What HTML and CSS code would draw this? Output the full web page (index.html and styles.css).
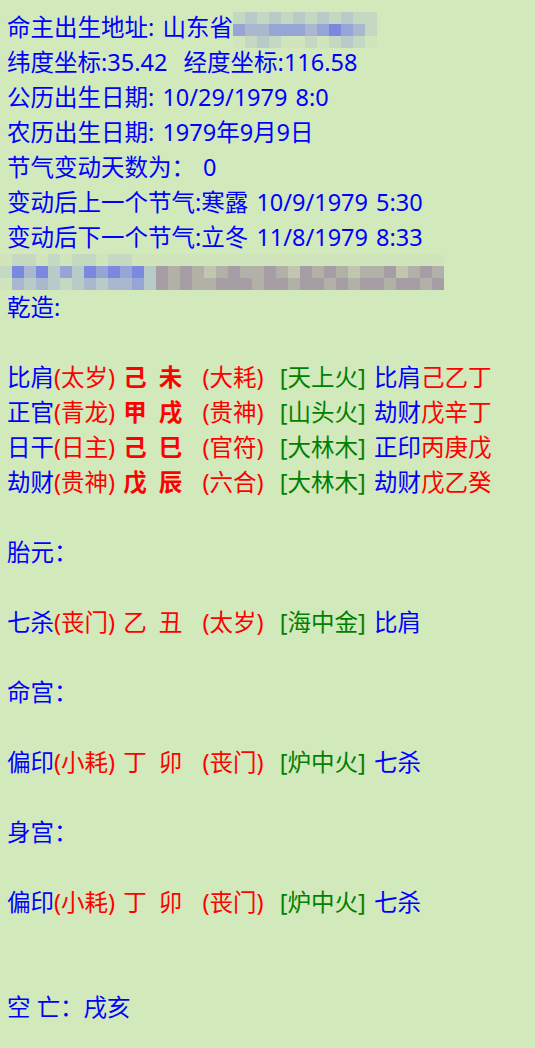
FILE: index.html
```html
<!DOCTYPE html>
<html>
<head>
<meta charset="utf-8">
<link rel="stylesheet" href="styles.css">
</head>
<body>
<div class="page">
  <div class="line">命主出生地址: 山东省<span class="mosaic m1"><span class="mrow"><i class="f1"></i><i class="f2"></i><i class="f1"></i><i class="f2"></i><i class="f1"></i><i class="f2"></i><i class="f1"></i><i class="f2"></i><i class="f1"></i><i class="f2"></i><i class="f1"></i><i class="f1"></i></span><span class="mrow"><i class="b2"></i><i class="b3"></i><i class="b3"></i><i class="b2"></i><i class="b2"></i><i class="b2"></i><i class="b3"></i><i class="b2"></i><i class="b1"></i><i class="b2"></i><i class="b3"></i><i class="f1"></i></span><span class="mrow"><i class="f0"></i><i class="f1"></i><i class="f2"></i><i class="f1"></i><i class="f0"></i><i class="f0"></i><i class="f1"></i><i class="f0"></i><i class="f1"></i><i class="f2"></i><i class="f1"></i><i class="f0"></i></span></span></div>
  <div class="line">纬度坐标:35.42  经度坐标:116.58</div>
  <div class="line">公历出生日期: 10/29/1979 8:0</div>
  <div class="line">农历出生日期: 1979年9月9日</div>
  <div class="line">节气变动天数为： 0</div>
  <div class="line">变动后上一个节气:寒露 10/9/1979 5:30</div>
  <div class="line">变动后下一个节气:立冬 11/8/1979 8:33</div>
  <div class="line mline"><span class="mosaic m2"><span class="mrow"><i class="f0"></i><i class="f1"></i><i class="f1"></i><i class="f0"></i><i class="f1"></i><i class="f0"></i><i class="f1"></i><i class="f1"></i><i class="f0"></i><i class="f1"></i><i class="f1"></i><i class="f0"></i><i class="f0"></i><i class="f0"></i><i class="f0"></i><i class="f0"></i><i class="f0"></i><i class="f0"></i><i class="f0"></i><i class="f0"></i><i class="f0"></i><i class="f0"></i><i class="f0"></i><i class="f0"></i><i class="f0"></i><i class="f0"></i><i class="f0"></i><i class="f0"></i><i class="f0"></i><i class="f0"></i><i class="f0"></i><i class="f0"></i><i class="f0"></i><i class="f0"></i><i class="f0"></i><i class="f0"></i><i class="f0"></i></span><span class="mrow"><i class="f1"></i><i class="b1"></i><i class="b3"></i><i class="b1"></i><i class="f2"></i><i class="b2"></i><i class="f2"></i><i class="b1"></i><i class="b2"></i><i class="b1"></i><i class="b2"></i><i class="b1"></i><i class="f2"></i><i class="g1"></i><i class="g2"></i><i class="g1"></i><i class="g2"></i><i class="g3"></i><i class="g2"></i><i class="g1"></i><i class="g2"></i><i class="g2"></i><i class="g1"></i><i class="g2"></i><i class="g3"></i><i class="g1"></i><i class="g2"></i><i class="g1"></i><i class="g2"></i><i class="g3"></i><i class="g2"></i><i class="g2"></i><i class="g1"></i><i class="g3"></i><i class="g2"></i><i class="g1"></i><i class="g2"></i></span><span class="mrow"><i class="f0"></i><i class="b3"></i><i class="f2"></i><i class="b3"></i><i class="f2"></i><i class="f1"></i><i class="f2"></i><i class="b3"></i><i class="f2"></i><i class="b3"></i><i class="b3"></i><i class="b2"></i><i class="f2"></i><i class="g1"></i><i class="g2"></i><i class="g1"></i><i class="g2"></i><i class="g2"></i><i class="g1"></i><i class="g1"></i><i class="g1"></i><i class="g2"></i><i class="g1"></i><i class="g1"></i><i class="g2"></i><i class="g1"></i><i class="g1"></i><i class="g2"></i><i class="g1"></i><i class="g2"></i><i class="g1"></i><i class="g1"></i><i class="g2"></i><i class="g1"></i><i class="g1"></i><i class="g2"></i><i class="g1"></i></span></span></div>
  <div class="line">乾造:</div>
  <div class="line"> </div>
  <div class="line">比肩<span class="r">(太岁) </span><b class="r gz">己 未</b><span class="r gap">   </span><span class="r">(大耗)</span>  <span class="g">[天上火]</span> 比肩<span class="r">己乙丁</span></div>
  <div class="line">正官<span class="r">(青龙) </span><b class="r gz">甲 戌</b><span class="r gap">   </span><span class="r">(贵神)</span>  <span class="g">[山头火]</span> 劫财<span class="r">戊辛丁</span></div>
  <div class="line">日干<span class="r">(日主) </span><b class="r gz">己 巳</b><span class="r gap">   </span><span class="r">(官符)</span>  <span class="g">[大林木]</span> 正印<span class="r">丙庚戊</span></div>
  <div class="line">劫财<span class="r">(贵神) </span><b class="r gz">戊 辰</b><span class="r gap">   </span><span class="r">(六合)</span>  <span class="g">[大林木]</span> 劫财<span class="r">戊乙癸</span></div>
  <div class="line"> </div>
  <div class="line">胎元：</div>
  <div class="line"> </div>
  <div class="line">七杀<span class="r">(丧门) </span><span class="r gz">乙 丑</span><span class="r gap">   </span><span class="r">(太岁)</span>  <span class="g">[海中金]</span> 比肩</div>
  <div class="line"> </div>
  <div class="line">命宫：</div>
  <div class="line"> </div>
  <div class="line">偏印<span class="r">(小耗) </span><span class="r gz">丁 卯</span><span class="r gap">   </span><span class="r">(丧门)</span>  <span class="g">[炉中火]</span> 七杀</div>
  <div class="line"> </div>
  <div class="line">身宫：</div>
  <div class="line"> </div>
  <div class="line">偏印<span class="r">(小耗) </span><span class="r gz">丁 卯</span><span class="r gap">   </span><span class="r">(丧门)</span>  <span class="g">[炉中火]</span> 七杀</div>
  <div class="line"> </div>
  <div class="line"> </div>
  <div class="line">空<span class="narrow"> </span>亡：戌亥</div>
</div>
</body>
</html>
```
FILE: styles.css
```css
html, body {
  margin: 0;
  padding: 0;
  background: #d2e9bb;
}
.page {
  padding: 10px 7px;
  font-family: "Noto Sans", "Noto Sans CJK SC", sans-serif;
  font-size: 23.5px;
  word-spacing: 2px;
  color: #0000ff;
  min-height: 1028px;
}
.line {
  height: 35px;
  line-height: 35px;
  white-space: pre;
}
.narrow { word-spacing: 0; }
.r { color: #ff0000; }
.g { color: #008000; }
b.r { font-weight: 700; }
.gz { word-spacing: 6px; }
.gap { word-spacing: 0.6px; }
.mosaic {
  display: inline-flex;
  flex-direction: column;
  vertical-align: top;
}
.m1 { margin-top: 2px; }
.mline {
  display: flex;
  align-items: flex-end;
}
.m2 { margin-left: -7px; margin-top: 6px; }
.mrow { display: flex; height: 12px; }
.mrow i { display: block; flex-shrink: 0; width: 12px; height: 12px; }
.f0 { background: #d0e5bc; }
.f1 { background: #c4d8c2; }
.f2 { background: #b9cbc8; }
.b1 { background: #7a88df; }
.b2 { background: #97a4d6; }
.b3 { background: #a9b8cf; }
.g1 { background: #a79da5; }
.g2 { background: #b1b1a7; }
.g3 { background: #c1c7ae; }
```
